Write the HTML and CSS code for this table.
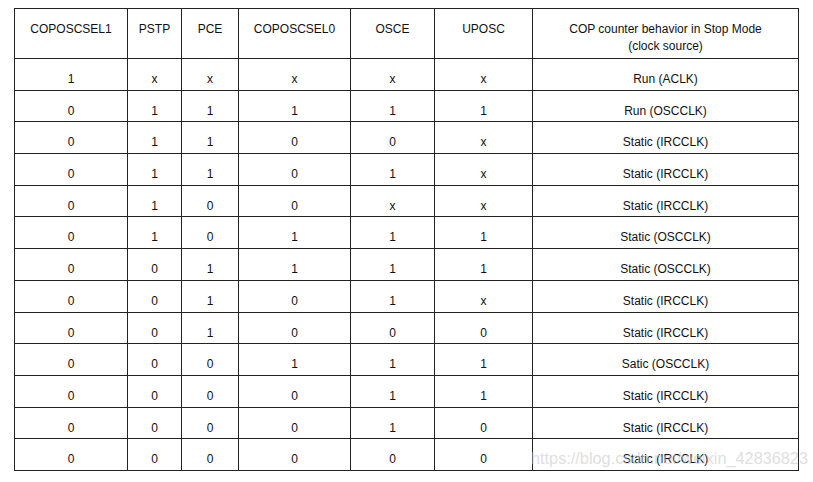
FILE: index.html
```html
<!DOCTYPE html>
<html>
<head>
<meta charset="utf-8">
<link rel="stylesheet" href="styles.css">
</head>
<body>
<div class="page">
<table class="cop">
<colgroup>
<col class="c1"><col class="c2"><col class="c3"><col class="c4"><col class="c5"><col class="c6"><col class="c7">
</colgroup>
<thead>
<tr><th>COPOSCSEL1</th><th>PSTP</th><th>PCE</th><th>COPOSCSEL0</th><th>OSCE</th><th>UPOSC</th><th>COP counter behavior in Stop Mode<br>(clock source)</th></tr>
</thead>
<tbody>
<tr><td>1</td><td>x</td><td>x</td><td>x</td><td>x</td><td>x</td><td>Run (ACLK)</td></tr>
<tr><td>0</td><td>1</td><td>1</td><td>1</td><td>1</td><td>1</td><td>Run (OSCCLK)</td></tr>
<tr><td>0</td><td>1</td><td>1</td><td>0</td><td>0</td><td>x</td><td>Static (IRCCLK)</td></tr>
<tr><td>0</td><td>1</td><td>1</td><td>0</td><td>1</td><td>x</td><td>Static (IRCCLK)</td></tr>
<tr><td>0</td><td>1</td><td>0</td><td>0</td><td>x</td><td>x</td><td>Static (IRCCLK)</td></tr>
<tr><td>0</td><td>1</td><td>0</td><td>1</td><td>1</td><td>1</td><td>Static (OSCCLK)</td></tr>
<tr><td>0</td><td>0</td><td>1</td><td>1</td><td>1</td><td>1</td><td>Static (OSCCLK)</td></tr>
<tr><td>0</td><td>0</td><td>1</td><td>0</td><td>1</td><td>x</td><td>Static (IRCCLK)</td></tr>
<tr><td>0</td><td>0</td><td>1</td><td>0</td><td>0</td><td>0</td><td>Static (IRCCLK)</td></tr>
<tr><td>0</td><td>0</td><td>0</td><td>1</td><td>1</td><td>1</td><td>Satic (OSCCLK)</td></tr>
<tr><td>0</td><td>0</td><td>0</td><td>0</td><td>1</td><td>1</td><td>Static (IRCCLK)</td></tr>
<tr><td>0</td><td>0</td><td>0</td><td>0</td><td>1</td><td>0</td><td>Static (IRCCLK)</td></tr>
<tr><td>0</td><td>0</td><td>0</td><td>0</td><td>0</td><td>0</td><td>Static (IRCCLK)</td></tr>
</tbody>
</table>
<div class="watermark">https://blog.csdn.net/weixin_42836823</div>
</div>
</body>
</html>
```
FILE: styles.css
```css
html, body {
  margin: 0;
  padding: 0;
  background: #fff;
}
.page {
  position: relative;
  width: 813px;
  height: 482px;
  padding: 8px 0 0 14px;
  box-sizing: border-box;
}
.cop {
  border-collapse: collapse;
  table-layout: fixed;
  width: 784px;
  font-family: "Liberation Sans", Arial, sans-serif;
  font-size: 12px;
  color: #111;
}
.c1 { width: 113px; }
.c2 { width: 54px; }
.c3 { width: 57px; }
.c4 { width: 112px; }
.c5 { width: 84px; }
.c6 { width: 98px; }
.c7 { width: 266px; }
.cop th, .cop td {
  border: 1px solid #222;
  text-align: center;
  line-height: 17px;
  padding: 0;
  box-sizing: border-box;
}
.cop th {
  font-weight: normal;
  height: 50px;
  vertical-align: top;
  padding-top: 12px;
}
.cop td {
  height: 31.7px;
  vertical-align: top;
  padding-top: 12px;
}
.watermark {
  position: absolute;
  left: 531px;
  top: 449px;
  font-family: "Liberation Sans", Arial, sans-serif;
  font-size: 16.3px;
  color: rgba(200, 200, 200, 0.6);
  white-space: nowrap;
}
```
